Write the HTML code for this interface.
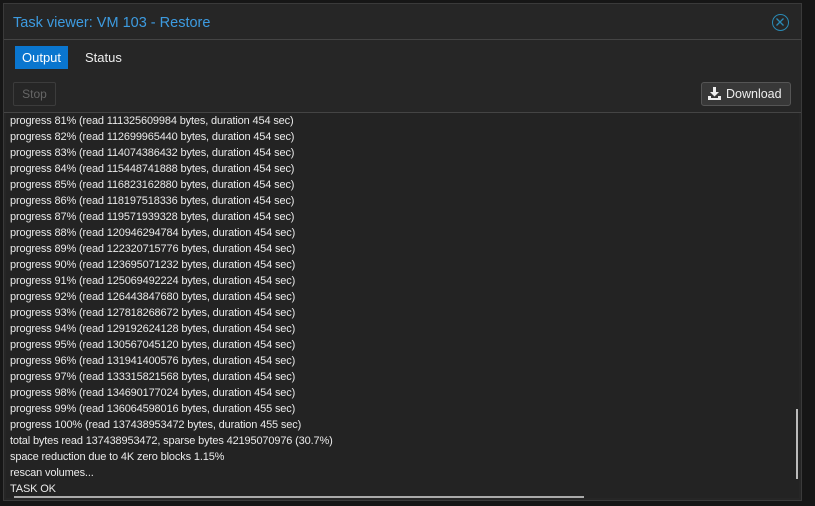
<!DOCTYPE html>
<html><head><style>
body{margin:0;width:815px;height:506px;background:#161616;font-family:"Liberation Sans",sans-serif;overflow:hidden;position:relative}
.win{position:absolute;left:3px;top:3px;width:799px;height:498px;background:#262626;border:1px solid #3a3a3a;box-sizing:border-box}
.title{position:absolute;left:9px;top:11px;color:#3d9be0;font-size:14.5px}
.close{position:absolute;left:768px;top:10px;width:17px;height:17px;border:1.5px solid #2a8ab5;border-radius:50%;box-sizing:border-box}
.tabs{position:absolute;left:0;top:35px;width:797px;height:36px;border-top:1px solid #444;border-bottom:1px solid #444}
.tab1{position:absolute;left:11px;top:6px;width:53px;height:23px;background:#0a76cf;color:#fff;font-size:13px;line-height:23px;text-align:center}
.tab2{position:absolute;left:81px;top:6px;color:#eee;font-size:13px;line-height:23px}
.tb{position:absolute;left:0;top:72px;width:797px;height:36px;background:#262626;border-bottom:1px solid #444}
.stop{position:absolute;left:9px;top:6px;width:43px;height:24px;border:1px solid #3c3c3c;border-radius:2px;color:#666;font-size:12px;line-height:22px;text-align:center;box-sizing:border-box}
.dl{position:absolute;left:697px;top:6px;width:90px;height:24px;border:1px solid #555;border-radius:3px;background:#383838;color:#eee;font-size:12.5px;line-height:22px;box-sizing:border-box;padding-left:24px}
.log{position:absolute;left:2px;top:109px;width:793px;height:385px;background:#232323;color:#eaeaea;font-size:11px;letter-spacing:-0.15px}
.log div{height:16px;line-height:16px;padding-left:4px;white-space:nowrap}
.vs{position:absolute;left:790px;top:296px;width:2px;height:70px;background:#bbb}
.hs{position:absolute;left:8px;top:383px;width:570px;height:2px;background:#aaa}
</style></head><body>
<div class="win">
<div class="title">Task viewer: VM 103 - Restore</div>
<div class="close"><svg style="position:absolute;left:3px;top:3px" width="8" height="8" viewBox="0 0 8 8"><path d="M0.5 0.5L7.5 7.5M7.5 0.5L0.5 7.5" stroke="#2a8ab5" stroke-width="1.3"/></svg></div>
<div class="tabs"><div class="tab1">Output</div><div class="tab2">Status</div></div>
<div class="tb"><div class="stop">Stop</div>
<div class="dl"><svg style="position:absolute;left:6px;top:4px" width="13" height="13" viewBox="0 0 13 13"><path d="M5 0h3v5h3L6.5 9.5 2 5h3z" fill="#eee"/><path d="M0 9h3v2h7V9h3v4H0z" fill="#eee"/></svg>Download</div></div>
<div class="log">
<div>progress 81% (read 111325609984 bytes, duration 454 sec)</div>
<div>progress 82% (read 112699965440 bytes, duration 454 sec)</div>
<div>progress 83% (read 114074386432 bytes, duration 454 sec)</div>
<div>progress 84% (read 115448741888 bytes, duration 454 sec)</div>
<div>progress 85% (read 116823162880 bytes, duration 454 sec)</div>
<div>progress 86% (read 118197518336 bytes, duration 454 sec)</div>
<div>progress 87% (read 119571939328 bytes, duration 454 sec)</div>
<div>progress 88% (read 120946294784 bytes, duration 454 sec)</div>
<div>progress 89% (read 122320715776 bytes, duration 454 sec)</div>
<div>progress 90% (read 123695071232 bytes, duration 454 sec)</div>
<div>progress 91% (read 125069492224 bytes, duration 454 sec)</div>
<div>progress 92% (read 126443847680 bytes, duration 454 sec)</div>
<div>progress 93% (read 127818268672 bytes, duration 454 sec)</div>
<div>progress 94% (read 129192624128 bytes, duration 454 sec)</div>
<div>progress 95% (read 130567045120 bytes, duration 454 sec)</div>
<div>progress 96% (read 131941400576 bytes, duration 454 sec)</div>
<div>progress 97% (read 133315821568 bytes, duration 454 sec)</div>
<div>progress 98% (read 134690177024 bytes, duration 454 sec)</div>
<div>progress 99% (read 136064598016 bytes, duration 455 sec)</div>
<div>progress 100% (read 137438953472 bytes, duration 455 sec)</div>
<div>total bytes read 137438953472, sparse bytes 42195070976 (30.7%)</div>
<div>space reduction due to 4K zero blocks 1.15%</div>
<div>rescan volumes...</div>
<div>TASK OK</div>
<span class="vs"></span><span class="hs"></span>
</div>
</div>
</body></html>
